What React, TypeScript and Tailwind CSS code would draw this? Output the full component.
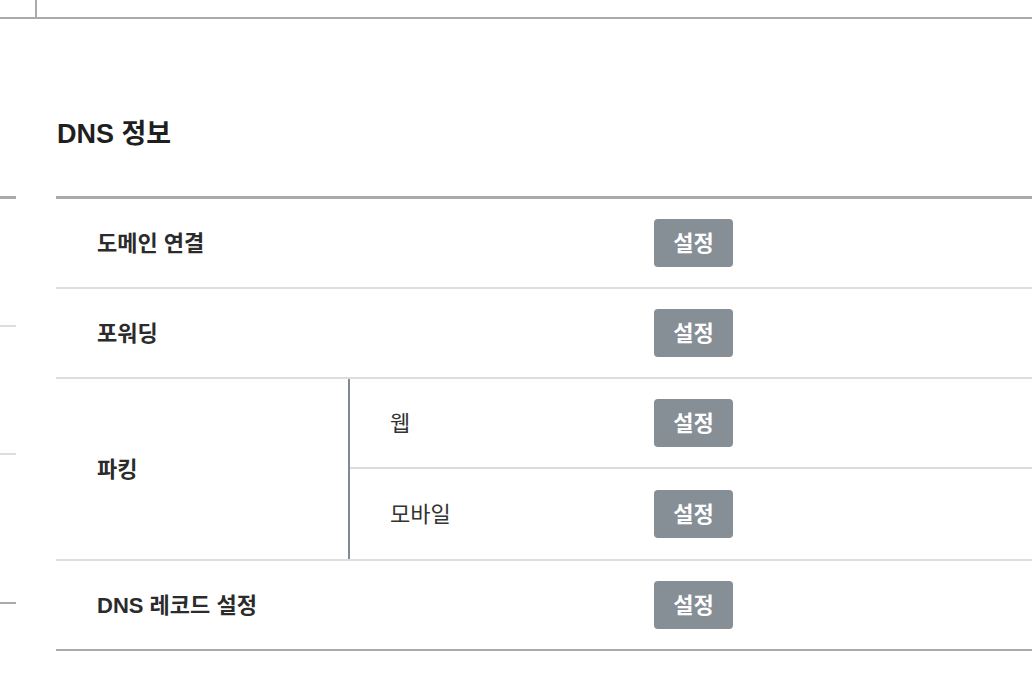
import React from 'react';

const font = { fontFamily: "'Liberation Sans', 'Noto Sans CJK KR', sans-serif" };

const SetButton: React.FC = () => (
  <button className="flex h-[48px] w-[79px] items-center justify-center rounded-[4px] bg-[#868e96] text-[22px] font-bold text-white">
    설정
  </button>
);

const Row: React.FC<{ label: string }> = ({ label }) => (
  <div className="flex h-[90px] items-center border-b-2 border-[#dddddd]">
    <div className="w-[598px] pl-[41px] text-[22px] font-bold text-[#2b2b2b]">{label}</div>
    <SetButton />
  </div>
);

const SubRow: React.FC<{ label: string; last?: boolean }> = ({ label, last }) => (
  <div className={`flex h-[90px] items-center ${last ? '' : 'border-b-2 border-[#dddddd]'}`}>
    <div className="w-[304px] pl-[40px] text-[22px] text-[#333]">{label}</div>
    <SetButton />
  </div>
);

export default function App() {
  return (
    <div className="min-h-[694px] w-[1032px] bg-white" style={font}>
      {/* top bar */}
      <div className="flex h-[19px] border-b-2 border-[#aaaaaa]">
        <div className="w-[35px]" />
        <div className="w-[2px] bg-[#aaaaaa]" />
      </div>

      <div className="flex">
        {/* left menu edge */}
        <div className="flex w-4 flex-col">
          <div className="h-[180px] border-b-[3px] border-[#aaaaaa]" />
          <div className="h-[128px] border-b-2 border-[#dddddd]" />
          <div className="h-[128px] border-b-2 border-[#dddddd]" />
          <div className="h-[149px] border-b-2 border-[#aaaaaa]" />
        </div>

        {/* main */}
        <div className="ml-[40px] flex-1">
          <h2 className="mt-[96px] mb-[42px] pl-px text-[27px] leading-[39px] font-bold text-[#1f1f1f]">DNS 정보</h2>

          <div className="border-t-[3px] border-b-2 border-t-[#aaaaaa] border-b-[#aaaaaa]">
            <Row label="도메인 연결" />
            <Row label="포워딩" />
            <div className="flex border-b-2 border-[#dddddd]">
              <div className="flex w-[292px] items-center pl-[41px] text-[22px] font-bold text-[#2b2b2b]">파킹</div>
              <div className="w-[2px] bg-[#7d8a9a]" />
              <div className="flex-1">
                <SubRow label="웹" />
                <SubRow label="모바일" last />
              </div>
            </div>
            <div className="flex h-[88px] items-center">
              <div className="w-[598px] pl-[41px] text-[22px] font-bold text-[#2b2b2b]">DNS 레코드 설정</div>
              <SetButton />
            </div>
          </div>
        </div>
      </div>
    </div>
  );
}
